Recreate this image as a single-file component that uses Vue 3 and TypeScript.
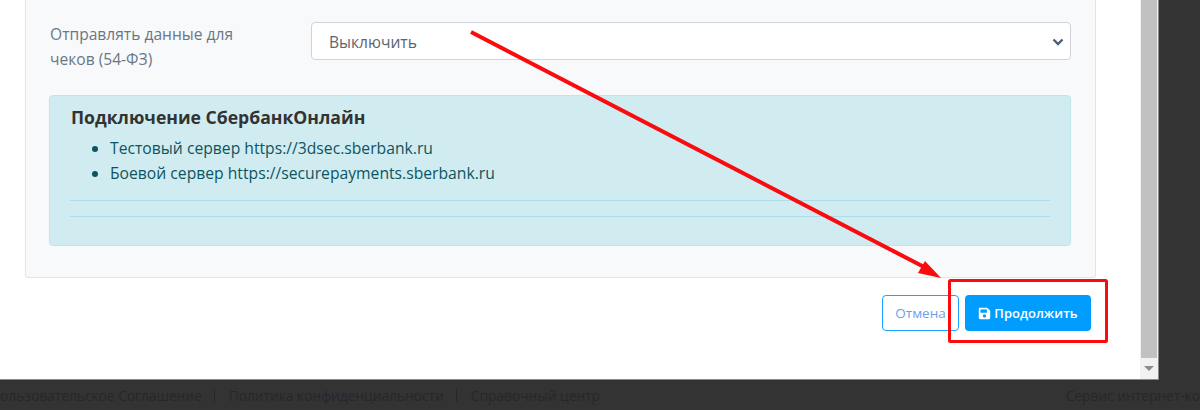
<script setup lang="ts">
const servers: string[] = [
  'Тестовый сервер https://3dsec.sberbank.ru',
  'Боевой сервер https://securepayments.sberbank.ru',
]
</script>

<template>
  <div class="page">
    <div class="window">
      <div class="content">
        <section class="panel">
          <div class="row">
            <label class="label">Отправлять данные для чеков (54-ФЗ)</label>
            <div class="select">
              <span>Выключить</span>
              <svg class="chev" width="12" height="8" viewBox="0 0 12 8"><path d="M1.5 1.5 6 6l4.500-4.500" fill="none" stroke="#4a5f78" stroke-width="2.400"/></svg>
            </div>
          </div>
          <div class="alert">
            <h4>Подключение СбербанкОнлайн</h4>
            <ul>
              <li v-for="s in servers" :key="s">{{ s }}</li>
            </ul>
            <hr />
            <hr />
          </div>
        </section>
        <div class="actions">
          <button class="btn ghost">Отмена</button>
          <button class="btn primary">
            <svg width="13" height="13" viewBox="0 0 448 512"><path fill="#fff" d="M433.900 129.900l-83.900-83.900A48 48 0 0 0 316.100 32H48C21.500 32 0 53.500 0 80v352c0 26.500 21.500 48 48 48h352c26.500 0 48-21.500 48-48V163.900a48 48 0 0 0-14.100-34zM224 416c-35.300 0-64-28.700-64-64s28.700-64 64-64 64 28.700 64 64-28.700 64-64 64zm96-304.500V212c0 6.600-5.400 12-12 12H76c-6.600 0-12-5.400-12-12V108c0-6.600 5.400-12 12-12h228.500c3.200 0 6.200 1.300 8.500 3.500l3.500 3.500c2.200 2.200 3.500 5.300 3.500 8.500z"/></svg>
            Продолжить
          </button>
        </div>
      </div>
      <div class="scrollbar">
        <div class="thumb"></div>
        <div class="arrow-down"></div>
      </div>
    </div>
    <footer class="footer">
      <div class="links">
        <span>Пользовательское Соглашение</span><i></i>
        <span>Политика конфиденциальности</span><i></i>
        <span>Справочный центр</span>
      </div>
      <span class="service">Сервис интернет-ко</span>
    </footer>
    <svg class="annotation" width="1200" height="410" viewBox="0 0 1200 410">
      <path d="M471 32 926 268" stroke="#fb0a0e" stroke-width="4" fill="none"/>
      <path d="M941 278 918 273 925 261Z" fill="#fb0a0e"/>
      <rect x="949.500" y="280.500" width="157" height="61" rx="1" fill="none" stroke="#fb0a0e" stroke-width="3"/>
    </svg>
  </div>
</template>

<style>
html, body { margin: 0; background: #333; }
</style>

<style scoped>
.page {
  position: relative;
  width: 1200px;
  height: 410px;
  overflow: hidden;
  background: #333;
  font-family: "Open Sans", "Noto Sans", sans-serif;
  display: flex;
  flex-direction: column;
}
.window {
  width: 1159px;
  height: 380px;
  flex: none;
  background: #fff;
  display: flex;
  box-sizing: border-box;
  border-bottom: 1px solid #8a8a8a;
  border-right: 1px solid #8a8a8a;
}
.content { flex: 1; padding-left: 25px; padding-right: 44px; min-width: 0; }
.panel {
  width: 1071px;
  height: 278px;
  box-sizing: border-box;
  background: #f8f9fb;
  border: 1px solid #e2e5e9;
  border-top: none;
  border-radius: 0 0 3px 3px;
  padding: 22px 24px 0 23px;
}
.row { display: flex; height: 73px; }
.label {
  width: 262px;
  flex: none;
  font-size: 15.6px;
  line-height: 25px;
  color: #6b7785;
  padding-left: 1px;
  padding-right: 50px;
  box-sizing: border-box;
}
.select {
  width: 760px;
  height: 38px;
  box-sizing: border-box;
  background: #fff;
  border: 1px solid #ced4da;
  border-radius: 4px;
  display: flex;
  align-items: center;
  justify-content: space-between;
  padding: 1px 6px 0 17px;
  font-size: 15.6px;
  color: #5c6670;
}
.alert {
  width: 1022px;
  height: 151px;
  box-sizing: border-box;
  background: #d1ecf1;
  border: 1px solid #bee5eb;
  border-radius: 4px;
  padding: 10px 20px 0 20px;
  color: #0c5460;
}
h4 {
  margin: 0 0 0 1px;
  font-size: 17.6px;
  line-height: 22px;
  font-weight: 700;
  color: #333;
}
ul { margin: 8px 0 0; padding: 0 0 0 40px; font-size: 15.7px; line-height: 25px; }
hr { border: none; border-top: 1px solid #aedcea; margin: 15px 0 0; }
ul + hr { margin-top: 14px; }
.actions {
  display: flex;
  justify-content: flex-end;
  gap: 6px;
  width: 1066px;
  margin-top: 17px;
}
.btn {
  height: 36px;
  box-sizing: border-box;
  border-radius: 4px;
  font-family: inherit;
  font-size: 13px;
  font-weight: 600;
  padding: 0;
  display: flex;
  align-items: center;
  justify-content: center;
  gap: 3px;
}
.ghost { width: 77px; background: #fff; border: 1px solid #1aa3ff; color: #6d9ee8; font-weight: 400; font-size: 13.5px; }
.primary { width: 126px; background: #009dff; border: none; color: #fff; }
.scrollbar {
  width: 18px;
  flex: none;
  background: #f1f1f1;
  position: relative;
}
.thumb { width: 16px; height: 358px; background: #c1c1c1; margin-left: 1px; }
.arrow-down {
  position: absolute;
  left: 4px;
  top: 366px;
  width: 0;
  height: 0;
  border-left: 5px solid transparent;
  border-right: 5px solid transparent;
  border-top: 5px solid #8c8c8c;
}
.footer {
  flex: 1;
  display: flex;
  justify-content: space-between;
  align-items: center;
  font-size: 13.75px;
  color: #23282d;
  white-space: nowrap;
}
.links { display: flex; align-items: center; margin-left: -10px; }
.links i { width: 1px; height: 13px; background: #23282d; margin: 0 14px 0 12px; }
.service { margin-left: auto; }
.annotation { position: absolute; left: 0; top: 0; pointer-events: none; }
</style>
